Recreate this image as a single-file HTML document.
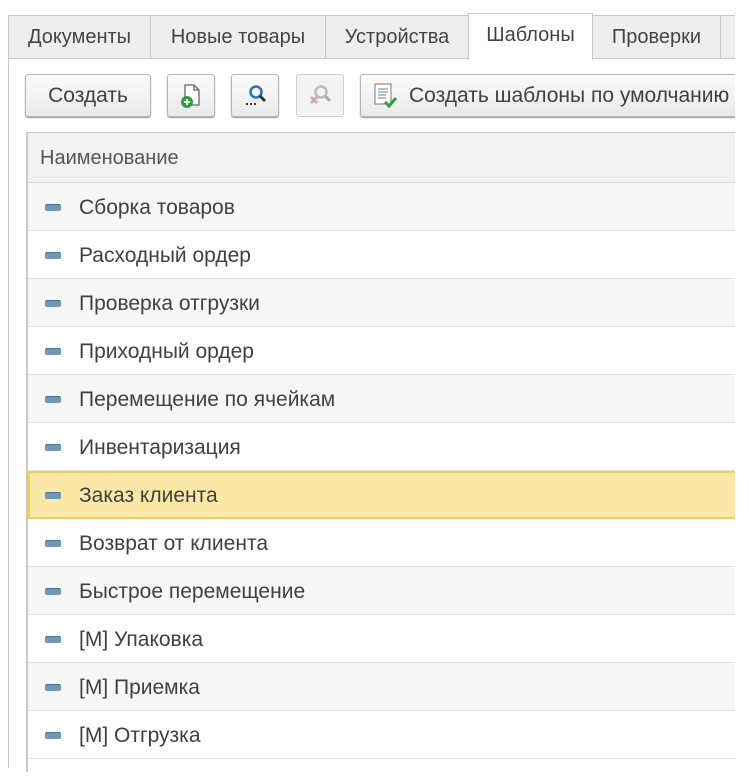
<!DOCTYPE html>
<html><head><meta charset="utf-8"><style>
*{margin:0;padding:0;box-sizing:border-box}
body{width:750px;height:780px;background:#fff;font-family:"Liberation Sans",Arial,sans-serif;color:#404040;position:relative;overflow:hidden}
.clip{position:absolute;left:0;top:0;width:735px;height:780px;overflow:hidden}
.tab{position:absolute;top:15px;height:44px;background:#eeeeee;border:1px solid #c8c8c8;font-size:20px;line-height:42px;text-align:center;color:#444;white-space:nowrap}
.tab.act{background:#fff;border-bottom:none;top:13px;height:47px}
.frame{position:absolute;left:8px;top:58px;width:740px;height:710px;border-left:1px solid #c8c8c8;border-top:1px solid #c8c8c8}
.btn{position:absolute;top:74px;height:43px;border:1px solid #b5b5b5;border-radius:3px;background:linear-gradient(#fbfbfb,#e9e9e9);box-shadow:0 1px 1px #999;font-size:21px;line-height:41px;text-align:center;color:#404040;white-space:nowrap}
.tbl{position:absolute;left:26px;top:132px;width:724px;height:640px;border-left:2px solid #c8c8c8;border-top:1px solid #c8c8c8}
.hdr{height:50px;background:#f2f2f2;border-bottom:1px solid #d8d8d8;font-size:20px;line-height:50px;padding-left:12px;color:#555}
.row{height:48px;border-bottom:1px solid #e4e4e4;font-size:21px;line-height:50px;padding-left:51px;position:relative;white-space:nowrap}
.row:nth-child(odd){background:#f7f7f7}
.row:nth-child(even){background:#fff}
.row::before{content:"";position:absolute;left:17px;top:21px;width:16px;height:6px;border-radius:2px;background:#6f95bb;border-top:1px solid #4c7197}
.row.sel{background:#fbe8a6;border:2px solid #f3cf55;padding-left:49px;line-height:46px}
.row.sel::before{left:15px;top:19px}
</style></head><body>
<div class="clip">
<div class="frame"></div>
<div class="tab" style="left:8px;width:143px">Документы</div>
<div class="tab" style="left:150px;width:176px">Новые товары</div>
<div class="tab" style="left:325px;width:144px">Устройства</div>
<div class="tab" style="left:592px;width:129px">Проверки</div>
<div class="tab" style="left:720px;width:20px"></div>
<div class="tab act" style="left:468px;width:125px">Шаблоны</div>

<div class="btn" style="left:25px;width:126px">Создать</div>
<div class="btn" style="left:167px;width:48px"><svg width="46" height="41" viewBox="0 0 46 41"><path d="M17 10h9l5 5v15H17z" fill="#fff" stroke="#666" stroke-width="1.3"/><path d="M26 10v5h5" fill="none" stroke="#666" stroke-width="1.3"/><circle cx="19" cy="27" r="6" fill="#2f9e3f"/><path d="M16 27h6M19 24v6" stroke="#fff" stroke-width="2"/></svg></div>
<div class="btn" style="left:231px;width:48px"><svg width="46" height="41" viewBox="0 0 46 41"><circle cx="24" cy="17" r="5.5" fill="none" stroke="#2d6fb0" stroke-width="2.5"/><path d="M28 21l5 5" stroke="#333" stroke-width="3"/><path d="M14 29h2M18 29h2M22 29h2" stroke="#333" stroke-width="2"/></svg></div>
<div class="btn" style="left:296px;width:48px;background:#f3f3f3;border-color:#d0d0d0;box-shadow:none"><svg width="46" height="41" viewBox="0 0 46 41"><circle cx="24" cy="17" r="5.5" fill="none" stroke="#bbb" stroke-width="2.5"/><path d="M28 21l5 5" stroke="#aaa" stroke-width="3"/><path d="M14 22l6 6M20 22l-6 6" stroke="#d8a0a8" stroke-width="2.5"/></svg></div>
<div class="btn" style="left:360px;width:420px;text-align:left;padding-left:48px">Создать шаблоны по умолчанию<svg style="position:absolute;left:10px;top:7px" width="28" height="28" viewBox="0 0 28 28"><rect x="4" y="2" width="16" height="20" fill="#fff" stroke="#777"/><path d="M7 7h10M7 10h10M7 13h8M7 16h8" stroke="#7a9cc0" stroke-width="1.3"/><path d="M14 20l4 4 7-8" fill="none" stroke="#3a9b3a" stroke-width="3"/></svg></div>

<div class="tbl">
<div class="hdr">Наименование</div>
<div>
<div class="row">Сборка товаров</div>
<div class="row">Расходный ордер</div>
<div class="row">Проверка отгрузки</div>
<div class="row">Приходный ордер</div>
<div class="row">Перемещение по ячейкам</div>
<div class="row">Инвентаризация</div>
<div class="row sel">Заказ клиента</div>
<div class="row">Возврат от клиента</div>
<div class="row">Быстрое перемещение</div>
<div class="row">[M] Упаковка</div>
<div class="row">[M] Приемка</div>
<div class="row">[M] Отгрузка</div>
</div>
</div>
</div>
</body></html>
